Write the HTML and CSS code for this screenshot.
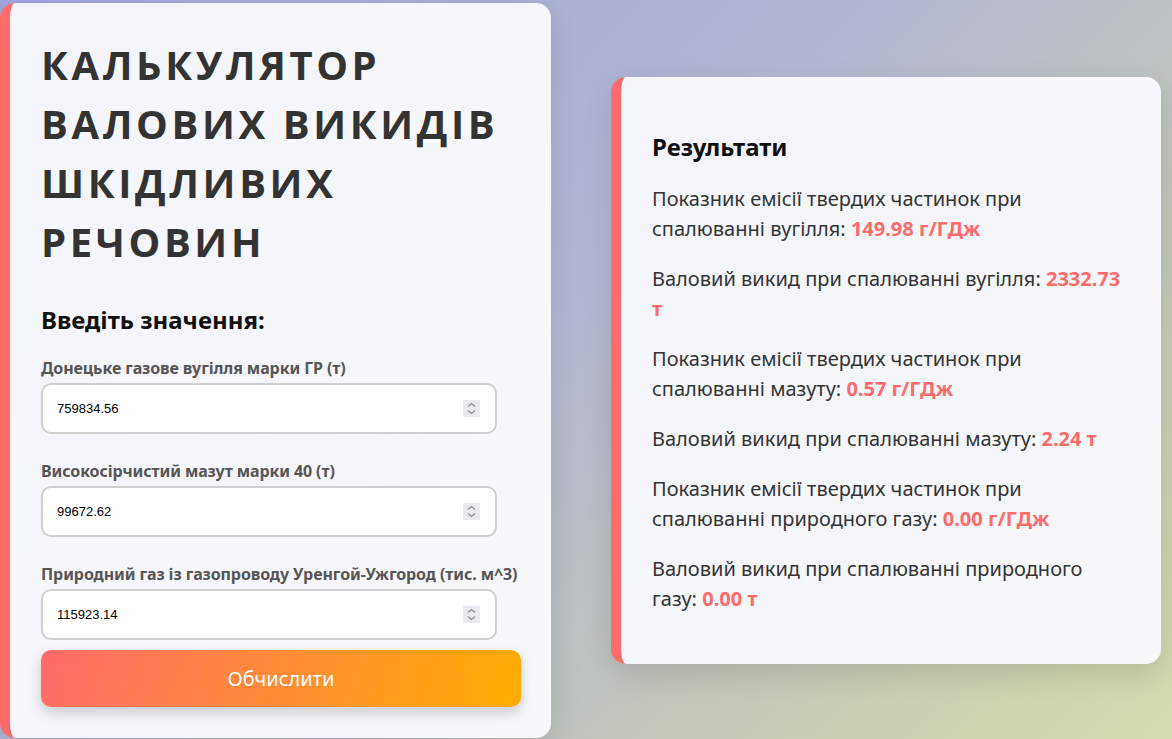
FILE: index.html
```html
<!DOCTYPE html>
<html lang="uk">
<head>
<meta charset="utf-8">
<title>Калькулятор валових викидів шкідливих речовин</title>
<link rel="stylesheet" href="styles.css">
</head>
<body>
<main class="page">
  <section class="card card-form">
    <h1 class="title">Калькулятор валових викидів шкідливих речовин</h1>
    <h2 class="subtitle">Введіть значення:</h2>
    <form class="form">
      <div class="field">
        <label class="label" for="coal">Донецьке газове вугілля марки ГР (т)</label>
        <div class="input-wrap">
          <input class="input" id="coal" type="number" value="759834.56">
          <span class="spin" aria-hidden="true"><svg width="9" height="13" viewBox="0 0 9 13"><path d="M1 4.5 L4.5 1.5 L8 4.5 M1 8.5 L4.5 11.5 L8 8.5" fill="none" stroke="#8a8a90" stroke-width="1.1"/></svg></span>
        </div>
      </div>
      <div class="field">
        <label class="label" for="oil">Високосірчистий мазут марки 40 (т)</label>
        <div class="input-wrap">
          <input class="input" id="oil" type="number" value="99672.62">
          <span class="spin" aria-hidden="true"><svg width="9" height="13" viewBox="0 0 9 13"><path d="M1 4.5 L4.5 1.5 L8 4.5 M1 8.5 L4.5 11.5 L8 8.5" fill="none" stroke="#8a8a90" stroke-width="1.1"/></svg></span>
        </div>
      </div>
      <div class="field">
        <label class="label" for="gas">Природний газ із газопроводу Уренгой-Ужгород (тис. м^3)</label>
        <div class="input-wrap">
          <input class="input" id="gas" type="number" value="115923.14">
          <span class="spin" aria-hidden="true"><svg width="9" height="13" viewBox="0 0 9 13"><path d="M1 4.5 L4.5 1.5 L8 4.5 M1 8.5 L4.5 11.5 L8 8.5" fill="none" stroke="#8a8a90" stroke-width="1.1"/></svg></span>
        </div>
      </div>
      <button class="button" type="button">Обчислити</button>
    </form>
  </section>
  <section class="card card-results">
    <h2 class="results-title">Результати</h2>
    <p class="result">Показник емісії твердих частинок при спалюванні вугілля: <strong class="value">149.98 г/ГДж</strong></p>
    <p class="result">Валовий викид при спалюванні вугілля: <strong class="value">2332.73 т</strong></p>
    <p class="result">Показник емісії твердих частинок при спалюванні мазуту: <strong class="value">0.57 г/ГДж</strong></p>
    <p class="result">Валовий викид при спалюванні мазуту: <strong class="value">2.24 т</strong></p>
    <p class="result">Показник емісії твердих частинок при спалюванні природного газу: <strong class="value">0.00 г/ГДж</strong></p>
    <p class="result">Валовий викид при спалюванні природного газу: <strong class="value">0.00 т</strong></p>
  </section>
</main>
</body>
</html>
```
FILE: styles.css
```css
* { box-sizing: border-box; }
html, body { margin: 0; height: 100%; }
body {
  font-family: "Noto Sans", "Open Sans", sans-serif;
  background: linear-gradient(135deg, #9fa5dc 0%, #b3b7d2 45%, #c3c9b8 75%, #d3dbab 100%);
  color: #333;
  overflow: hidden;
}
.page {
  height: 739px;
  display: flex;
  align-items: center;
  gap: 60px;
  padding: 2px 11px 0 0;
}
.card {
  width: 550px;
  background: linear-gradient(120deg, #f4f5fb 0%, #f8f8fa 100%);
  border-left: 10px solid #ff6b6b;
  border-radius: 15px;
  box-shadow: 0 10px 30px rgba(0, 0, 0, 0.12);
}
.card-form {
  width: 551px;
  height: 735px;
  padding: 32px 30px 30px 31px;
}
.title {
  margin: 0 0 32px;
  font-family: "Open Sans", "Noto Sans", sans-serif;
  font-size: 40px;
  line-height: 59px;
  font-weight: 700;
  letter-spacing: 3.6px;
  text-transform: uppercase;
  color: #333;
}
.subtitle {
  margin: 0 0 21px;
  font-size: 24px;
  line-height: 33px;
  font-weight: 700;
  color: #111;
}
.form { display: flex; flex-direction: column; }
.field { margin-bottom: 26px; }
.field:nth-last-child(2) { margin-bottom: 10px; }
.label {
  display: block;
  margin-bottom: 4px;
  font-size: 16px;
  line-height: 22px;
  font-weight: 700;
  letter-spacing: -0.1px;
  color: #555;
  white-space: nowrap;
}
.input-wrap {
  position: relative;
  width: 95%;
}
.input {
  display: block;
  width: 100%;
  height: 51px;
  padding: 0 14px;
  border: 2px solid #d0d0d0;
  border-radius: 10px;
  background: #fff;
  font-family: "Liberation Sans", Arial, sans-serif;
  font-size: 13px;
  color: #000;
  -moz-appearance: textfield;
}
.input::-webkit-inner-spin-button,
.input::-webkit-outer-spin-button { -webkit-appearance: none; margin: 0; }
.spin {
  position: absolute;
  right: 17px;
  top: 17px;
  width: 17px;
  height: 17px;
  display: flex;
  align-items: center;
  justify-content: center;
  background: #e9e9ef;
  border-radius: 1px;
}
.button {
  height: 57px;
  width: 100%;
  border: none;
  border-radius: 10px;
  background: linear-gradient(110deg, #ff6b6b 0%, #ffad00 100%);
  color: #fff;
  font-family: "Noto Sans", sans-serif;
  font-size: 20px;
  box-shadow: 0 6px 14px rgba(0, 0, 0, 0.18);
}
.card-results {
  padding: 54px 40px 50px 31px;
}
.results-title {
  margin: 0 0 21px;
  font-size: 24px;
  line-height: 32px;
  font-weight: 700;
  color: #111;
}
.result {
  margin: 0 0 20px;
  font-size: 20px;
  line-height: 30px;
  color: #333;
}
.result:last-child { margin-bottom: 0; }
.value { color: #ff6b6b; font-weight: 700; }
```
